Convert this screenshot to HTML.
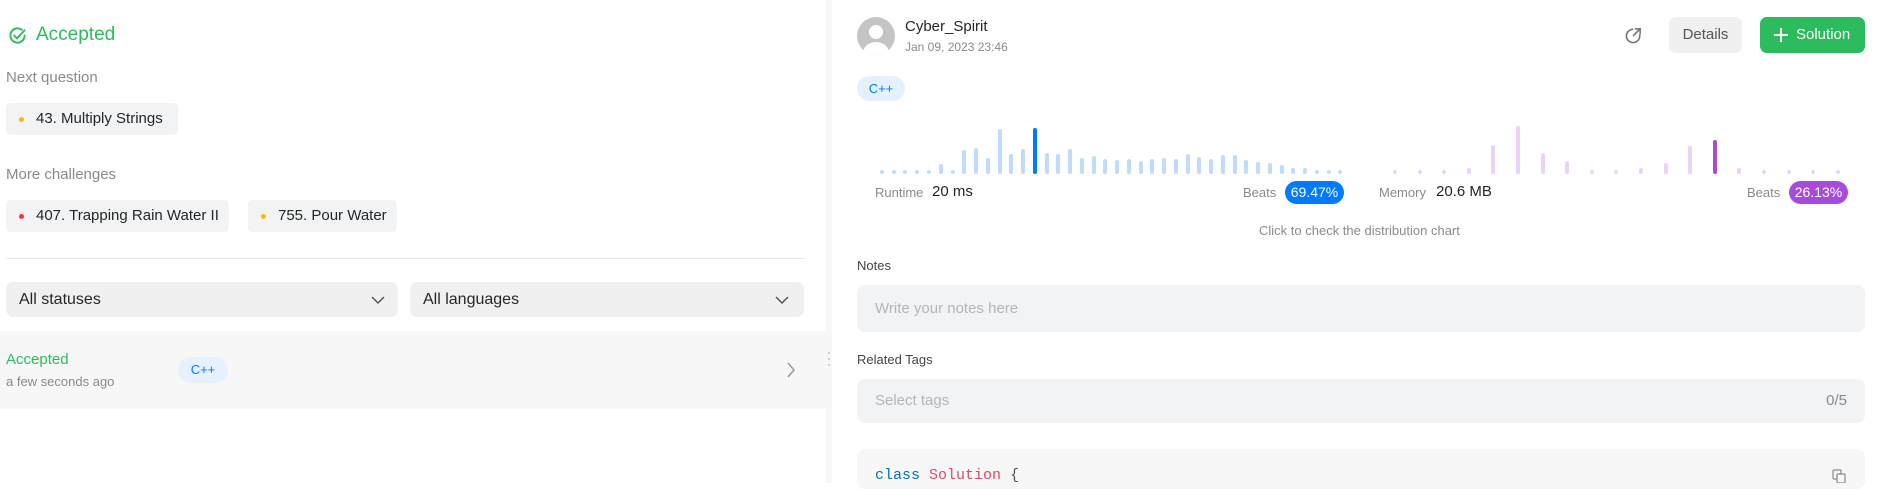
<!DOCTYPE html>
<html><head><meta charset="utf-8"><style>
*{box-sizing:border-box;margin:0;padding:0}
body{width:1883px;height:483px;overflow:hidden;background:#fff;font-family:"Liberation Sans",sans-serif;position:relative;color:#262626}
.a{position:absolute;white-space:nowrap}
.chip{position:absolute;background:#f2f3f4;border-radius:5px;height:32px;font-size:15px;line-height:32px;padding-left:30px;color:#262626}
.dot{position:absolute;left:13px;top:14px;width:5px;height:5px;border-radius:50%}
.sel{position:absolute;background:#f0f0f1;border-radius:7px;height:35px;font-size:16px;line-height:35px;padding-left:13px;color:#262626}
.b{position:absolute;width:4px;border-radius:2px;background:#bfdcfb}
.m{position:absolute;width:4px;border-radius:2px;background:#ead3fa}
.gray{color:#8a8a8a}
</style></head><body>
<!-- left -->
<svg class="a" style="left:8px;top:26px" width="19" height="19" viewBox="0 0 20 20"><path d="M17.5 10a7.5 7.5 0 1 1-3-6" fill="none" stroke="#2cbb5d" stroke-width="2" stroke-linecap="round"/><path d="M6.5 10l3 3 8-8.5" fill="none" stroke="#2cbb5d" stroke-width="2" stroke-linecap="round" stroke-linejoin="round"/></svg>
<div class="a" style="left:36px;top:24px;font-size:19px;color:#2cbb5d">Accepted</div>
<div class="a gray" style="left:6px;top:69px;font-size:15px">Next question</div>
<div class="chip" style="left:6px;top:103px;width:172px"><span class="dot" style="background:#ffb800"></span>43. Multiply Strings</div>
<div class="a gray" style="left:6px;top:166px;font-size:15px">More challenges</div>
<div class="chip" style="left:6px;top:200px;width:223px"><span class="dot" style="background:#f63636"></span>407. Trapping Rain Water II</div>
<div class="chip" style="left:248px;top:200px;width:149px"><span class="dot" style="background:#ffb800"></span>755. Pour Water</div>
<div class="a" style="left:6px;top:258px;width:799px;height:1px;background:#e8e8e8"></div>
<div class="sel" style="left:6px;top:282px;width:392px">All statuses</div>
<div class="sel" style="left:410px;top:282px;width:394px">All languages</div>
<svg class="a" style="left:370px;top:294px" width="16" height="12" viewBox="0 0 16 12"><path d="M2 3l6 6 6-6" fill="none" stroke="#555" stroke-width="1.5"/></svg>
<svg class="a" style="left:774px;top:294px" width="16" height="12" viewBox="0 0 16 12"><path d="M2 3l6 6 6-6" fill="none" stroke="#555" stroke-width="1.5"/></svg>
<div class="a" style="left:0;top:331px;width:826px;height:78px;background:#f7f7f7"></div>
<div class="a" style="left:6px;top:351px;font-size:15px;color:#2cbb5d">Accepted</div>
<div class="a gray" style="left:6px;top:374px;font-size:13px">a few seconds ago</div>
<div class="a" style="left:178px;top:357px;width:50px;height:26px;border-radius:13px;background:#e6f1fe;color:#007aff;font-size:13px;line-height:26px;text-align:center">C++</div>
<svg class="a" style="left:785px;top:361px" width="12" height="18" viewBox="0 0 12 18"><path d="M3 2l6 7-6 7" fill="none" stroke="#999" stroke-width="1.5"/></svg>
<!-- divider -->
<div class="a" style="left:826px;top:0;width:6px;height:483px;background:#f7f7f8"></div>
<div class="a" style="left:828px;top:352px;width:2px;height:2px;background:#ccc"></div>
<div class="a" style="left:828px;top:358px;width:2px;height:2px;background:#ccc"></div>
<div class="a" style="left:828px;top:364px;width:2px;height:2px;background:#ccc"></div>
<!-- right header -->
<svg class="a" style="left:857px;top:17px" width="38" height="38" viewBox="0 0 38 38"><defs><clipPath id="c"><circle cx="19" cy="19" r="19"/></clipPath></defs><circle cx="19" cy="19" r="19" fill="#c4c4c4"/><g clip-path="url(#c)" fill="#fff"><circle cx="19" cy="15" r="7"/><ellipse cx="19" cy="36" rx="13" ry="11"/></g></svg>
<div class="a" style="left:905px;top:18px;font-size:15px;color:#262626">Cyber_Spirit</div>
<div class="a gray" style="left:905px;top:40px;font-size:12px">Jan 09, 2023 23:46</div>
<svg class="a" style="left:1624px;top:26px" width="19" height="19" viewBox="0 0 20 20"><path d="M9 3.5a7 7 0 1 0 7.5 6" fill="none" stroke="#777" stroke-width="1.7" stroke-linecap="round"/><path d="M12 3h5v5M17 3l-7 7" fill="none" stroke="#777" stroke-width="1.7" stroke-linecap="round"/></svg>
<div class="a" style="left:1669px;top:17px;width:73px;height:36px;border-radius:7px;background:#f0f0f1;font-size:15px;line-height:36px;text-align:center;color:#555">Details</div>
<div class="a" style="left:1760px;top:17px;width:105px;height:36px;border-radius:7px;background:#2cbb5d;font-size:15px;line-height:36px;color:#fff;padding-left:36px">Solution</div>
<svg class="a" style="left:1773px;top:27px" width="16" height="16" viewBox="0 0 16 16"><path d="M8 1v14M1 8h14" stroke="#fff" stroke-width="2"/></svg>
<div class="a" style="left:857px;top:76px;width:48px;height:25px;border-radius:13px;background:#e6f1fe;color:#007aff;font-size:13px;line-height:25px;text-align:center">C++</div>
<!-- runtime bars -->
<div id="rb"></div>
<div class="b" style="left:880px;top:170px;height:4px"></div><div class="b" style="left:892px;top:170px;height:4px"></div><div class="b" style="left:903px;top:170px;height:4px"></div><div class="b" style="left:915px;top:170px;height:4px"></div><div class="b" style="left:927px;top:170px;height:4px"></div><div class="b" style="left:939px;top:164px;height:10px"></div><div class="b" style="left:951px;top:170px;height:4px"></div><div class="b" style="left:962px;top:150px;height:24px"></div><div class="b" style="left:974px;top:148px;height:26px"></div><div class="b" style="left:986px;top:158px;height:16px"></div><div class="b" style="left:998px;top:129px;height:45px"></div><div class="b" style="left:1009px;top:154px;height:20px"></div><div class="b" style="left:1021px;top:149px;height:25px"></div><div class="b" style="left:1033px;top:128px;height:46px;background:#007aff"></div><div class="b" style="left:1045px;top:153px;height:21px"></div><div class="b" style="left:1056px;top:154px;height:20px"></div><div class="b" style="left:1068px;top:149px;height:25px"></div><div class="b" style="left:1080px;top:158px;height:16px"></div><div class="b" style="left:1092px;top:156px;height:18px"></div><div class="b" style="left:1103px;top:159px;height:15px"></div><div class="b" style="left:1115px;top:160px;height:14px"></div><div class="b" style="left:1127px;top:159px;height:15px"></div><div class="b" style="left:1139px;top:161px;height:13px"></div><div class="b" style="left:1150px;top:159px;height:15px"></div><div class="b" style="left:1162px;top:158px;height:16px"></div><div class="b" style="left:1174px;top:159px;height:15px"></div><div class="b" style="left:1186px;top:154px;height:20px"></div><div class="b" style="left:1197px;top:157px;height:17px"></div><div class="b" style="left:1209px;top:159px;height:15px"></div><div class="b" style="left:1221px;top:155px;height:19px"></div><div class="b" style="left:1233px;top:155px;height:19px"></div><div class="b" style="left:1244px;top:160px;height:14px"></div><div class="b" style="left:1256px;top:162px;height:12px"></div><div class="b" style="left:1268px;top:163px;height:11px"></div><div class="b" style="left:1280px;top:165px;height:9px"></div><div class="b" style="left:1291px;top:168px;height:6px"></div><div class="b" style="left:1303px;top:168px;height:6px"></div><div class="b" style="left:1315px;top:170px;height:4px"></div><div class="b" style="left:1327px;top:170px;height:4px"></div><div class="b" style="left:1338px;top:170px;height:4px"></div>
<!-- memory bars -->
<div class="m" style="left:1393px;top:170px;height:4px"></div><div class="m" style="left:1418px;top:170px;height:4px"></div><div class="m" style="left:1442px;top:170px;height:4px"></div><div class="m" style="left:1467px;top:168px;height:6px"></div><div class="m" style="left:1491px;top:145px;height:29px"></div><div class="m" style="left:1516px;top:126px;height:48px"></div><div class="m" style="left:1541px;top:153px;height:21px"></div><div class="m" style="left:1565px;top:161px;height:13px"></div><div class="m" style="left:1590px;top:170px;height:4px"></div><div class="m" style="left:1614px;top:170px;height:4px"></div><div class="m" style="left:1639px;top:168px;height:6px"></div><div class="m" style="left:1664px;top:163px;height:11px"></div><div class="m" style="left:1688px;top:146px;height:28px"></div><div class="m" style="left:1713px;top:140px;height:34px;background:#a64bdb"></div><div class="m" style="left:1737px;top:168px;height:6px"></div><div class="m" style="left:1762px;top:170px;height:4px"></div><div class="m" style="left:1787px;top:170px;height:4px"></div><div class="m" style="left:1811px;top:170px;height:4px"></div><div class="m" style="left:1836px;top:170px;height:4px"></div>
<div class="a gray" style="left:875px;top:185px;font-size:13px">Runtime</div>
<div class="a" style="left:932px;top:183px;font-size:15px">20 ms</div>
<div class="a gray" style="left:1243px;top:185px;font-size:13px">Beats</div>
<div class="a" style="left:1285px;top:181px;width:59px;height:23px;border-radius:12px;background:#007aff;color:#fff;font-size:14px;line-height:23px;text-align:center">69.47%</div>
<div class="a gray" style="left:1379px;top:185px;font-size:13px">Memory</div>
<div class="a" style="left:1436px;top:183px;font-size:15px">20.6 MB</div>
<div class="a gray" style="left:1747px;top:185px;font-size:13px">Beats</div>
<div class="a" style="left:1789px;top:181px;width:59px;height:23px;border-radius:12px;background:#a64bdb;color:#fff;font-size:14px;line-height:23px;text-align:center">26.13%</div>
<div class="a gray" style="left:1259px;top:223px;font-size:13px">Click to check the distribution chart</div>
<div class="a" style="left:857px;top:258px;font-size:13px;color:#444">Notes</div>
<div class="a" style="left:857px;top:285px;width:1008px;height:47px;border-radius:8px;background:#f2f3f4;font-size:15px;line-height:47px;padding-left:18px;color:#b5b5b5">Write your notes here</div>
<div class="a" style="left:857px;top:352px;font-size:13px;color:#444">Related Tags</div>
<div class="a" style="left:857px;top:379px;width:1008px;height:44px;border-radius:8px;background:#f2f3f4;font-size:15px;line-height:44px;padding-left:18px;color:#b5b5b5">Select tags<span style="position:absolute;right:18px;color:#8a8a8a">0/5</span></div>
<div class="a" style="left:857px;top:449px;width:1008px;height:40px;border-radius:8px;background:#f7f7f8"></div>
<div class="a" style="left:875px;top:467px;font-family:'Liberation Mono',monospace;font-size:15px"><span style="color:#0077aa">class</span> <span style="color:#dd4a68">Solution</span> <span style="color:#555">{</span></div>
<svg class="a" style="left:1832px;top:469px" width="14" height="14" viewBox="0 0 14 14"><rect x="1" y="1" width="8" height="9" rx="1" fill="none" stroke="#888" stroke-width="1.2"/><rect x="5" y="5" width="8" height="9" rx="1" fill="#f7f7f8" stroke="#888" stroke-width="1.2"/></svg>
</body></html>
